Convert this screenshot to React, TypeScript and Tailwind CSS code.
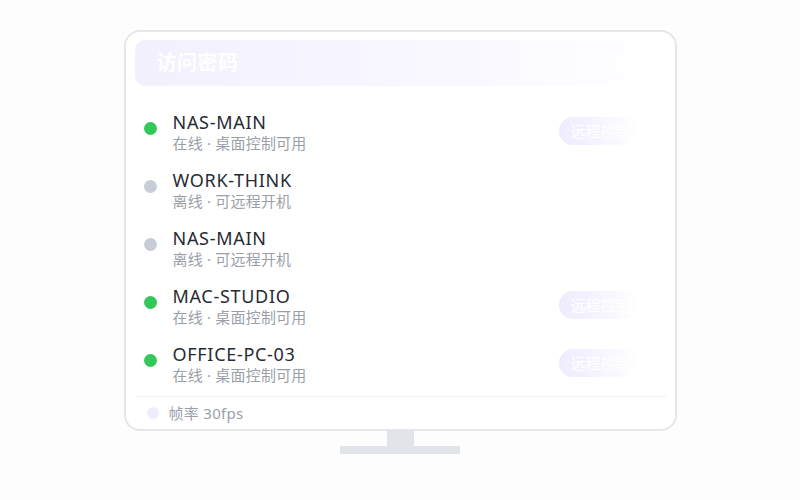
import React from 'react';

type Device = { name: string; online: boolean };

const devices: Device[] = [
  { name: 'NAS-MAIN', online: true },
  { name: 'WORK-THINK', online: false },
  { name: 'NAS-MAIN', online: false },
  { name: 'MAC-STUDIO', online: true },
  { name: 'OFFICE-PC-03', online: true },
];

function DeviceRow({ d }: { d: Device }) {
  return (
    <div className="flex items-start h-[42px] pl-[9px] pr-[27px]">
      <span
        className={
          'mt-[11px] w-[13px] h-[13px] rounded-full shrink-0 ' +
          (d.online ? 'bg-[#34c759]' : 'bg-[#c8ccd4]')
        }
      />
      <div className="ml-[16px] flex flex-col flex-1 min-w-0">
        <span className="text-[18px] leading-[22px] text-[#262b33] tracking-[0.7px]">{d.name}</span>
        <span className="text-[15px] leading-[20px] text-[#9a9fa8] tracking-[0.2px]">
          {d.online ? '在线 · 桌面控制可用' : '离线 · 可远程开机'}
        </span>
      </div>
      {d.online && (
        <button className="mt-[6px] h-[28px] w-[80px] rounded-full bg-gradient-to-r from-[#efebfe] via-[#f6f4ff] to-white text-left pl-3 text-[15px] leading-[28px] text-white">
          远程控制
        </button>
      )}
    </div>
  );
}

export default function App() {
  return (
    <div
      className="w-[800px] h-[500px] bg-[#fdfdfe] flex flex-col items-center pt-[30px]"
      style={{ fontFamily: '"Noto Sans", "Noto Sans CJK SC", sans-serif' }}
    >
      <div className="w-[553px] h-[401px] rounded-[16px] border-2 border-[#e4e6ea] bg-white px-[9px] pt-[8px] flex flex-col">
        <div className="h-[46px] rounded-[10px] bg-gradient-to-r from-[#f3f0fe] via-[#f8f6ff] to-white flex items-center justify-between pl-[22px] pr-[30px]">
          <span className="text-[20px] font-bold text-white tracking-[0.5px]">访问密码</span>
          <span className="text-[14px] text-white">已加密</span>
        </div>
        <div className="flex flex-col gap-[16px] mt-[25px]">
          {devices.map((d, i) => (
            <DeviceRow key={i} d={d} />
          ))}
        </div>
        <div className="mt-[11px] border-t border-[#eff0f3] flex-1 flex items-center pl-[12px]">
          <span className="w-[12px] h-[12px] rounded-full bg-[#efecfd]" />
          <span className="ml-[10px] text-[15px] text-[#9a9fa8] tracking-[0.3px]">帧率 30fps</span>
        </div>
      </div>
      <div className="w-[27px] h-[15px] bg-[#e1e5e9]" />
      <div className="w-[120px] h-[8px] bg-[#e1e5e9]" />
    </div>
  );
}
